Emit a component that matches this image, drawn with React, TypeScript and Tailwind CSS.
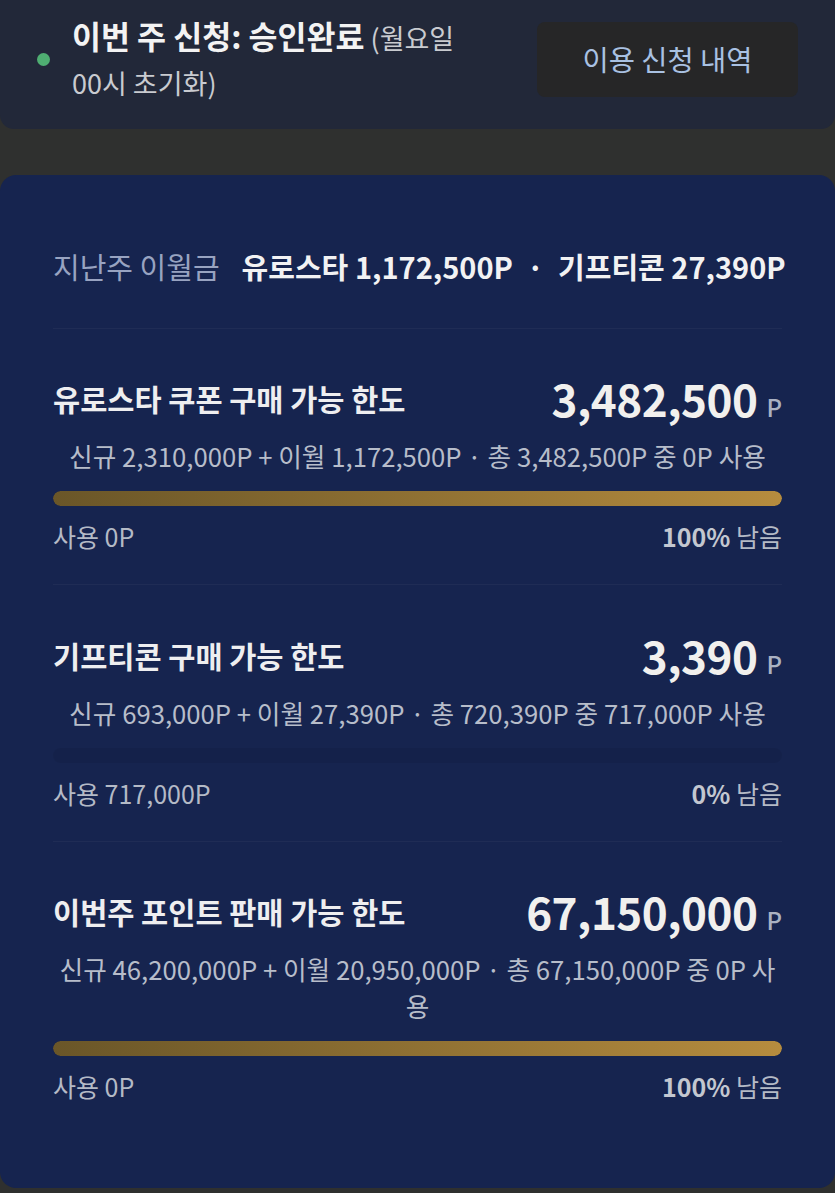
const font = { fontFamily: '"Noto Sans CJK KR", "Noto Sans", sans-serif' };

interface LimitProps {
  title: string;
  value: string;
  detail: string;
  used: string;
  remain: string;
  percent: number;
  first?: boolean;
  last?: boolean;
}

const LimitSection = ({ title, value, detail, used, remain, percent, first, last }: LimitProps) => {
  return (
    <div
      className={
        last
          ? "pt-[43px]"
          : `${first ? "pt-[43px]" : "pt-[44px]"} pb-[33px] border-b border-white/[0.04]`
      }
    >
      <div className="flex items-center justify-between h-[52px]">
        <h2 className="text-[29.5px] font-bold text-[#eeeef0] leading-[52px]">{title}</h2>
        <div className="flex items-baseline gap-[9px]">
          <span className="text-[44px] font-bold text-[#f1f0ee] leading-[52px] tracking-[-0.5px]">{value}</span>
          <span className="text-[24px] font-medium text-[#aab1c2]">P</span>
        </div>
      </div>
      <p className="mt-[13px] text-center text-[25.7px] leading-[37px] text-[#b7bdca]">{detail}</p>
      <div className="mt-[17px] h-[15px] w-full rounded-full bg-black/[0.06] overflow-hidden">
        <div
          className="h-full rounded-full bg-gradient-to-r from-[#6a5628] to-[#b68c3e]"
          style={{ width: `${percent}%` }}
        />
      </div>
      <div className="mt-[15px] flex items-center justify-between text-[25px] leading-[30px] text-[#b4bac6]">
        <span>{used}</span>
        <span>
          <b className="font-bold text-[#c3c7d0]">{remain}</b> 남음
        </span>
      </div>
    </div>
  );
};

export default function App() {
  return (
    <div className="min-h-[1193px] bg-[#2f302f] pb-[3px]" style={font}>
      <div className="flex items-center bg-[#222839] rounded-b-[14px] pt-[13px] pb-[24px] pl-[37px] pr-[37px]">
        <span className="h-[13px] w-[13px] rounded-full bg-[#4fae72] shrink-0" />
        <div className="ml-[22px] flex-1 text-[27px] leading-[45px] text-[#c9cbd0]">
          <div className="whitespace-nowrap">
            <span className="text-[31.5px] font-bold text-[#f3f3f3]">이번 주 신청: 승인완료</span>
            <span> (월요일</span>
          </div>
          <div>00시 초기화)</div>
        </div>
        <button className="h-[75px] w-[261px] shrink-0 rounded-lg bg-[#262627] text-[28.5px] text-[#a9c1e2]">
          이용 신청 내역
        </button>
      </div>

      <div className="mt-[46px] bg-[#16244f] rounded-[16px] px-[53px] pt-[74px] pb-[87px]">
        <div className="pb-[45px] border-b border-white/[0.04] text-[29px] leading-[34px] whitespace-nowrap">
          <span className="text-[#98a3c1]">지난주 이월금</span>
          <span className="ml-[22px] font-bold text-[#f2f2f3]">유로스타 1,172,500P</span>
          <span className="mx-[14px] font-bold text-[#f2f2f3]">·</span>
          <span className="font-bold text-[#f2f2f3]">기프티콘 27,390P</span>
        </div>

        <LimitSection
          title="유로스타 쿠폰 구매 가능 한도"
          value="3,482,500"
          detail="신규 2,310,000P + 이월 1,172,500P · 총 3,482,500P 중 0P 사용"
          used="사용 0P"
          remain="100%"
          percent={100}
          first
        />
        <LimitSection
          title="기프티콘 구매 가능 한도"
          value="3,390"
          detail="신규 693,000P + 이월 27,390P · 총 720,390P 중 717,000P 사용"
          used="사용 717,000P"
          remain="0%"
          percent={0}
        />
        <LimitSection
          title="이번주 포인트 판매 가능 한도"
          value="67,150,000"
          detail="신규 46,200,000P + 이월 20,950,000P · 총 67,150,000P 중 0P 사용"
          used="사용 0P"
          remain="100%"
          percent={100}
          last
        />
      </div>
    </div>
  );
}
